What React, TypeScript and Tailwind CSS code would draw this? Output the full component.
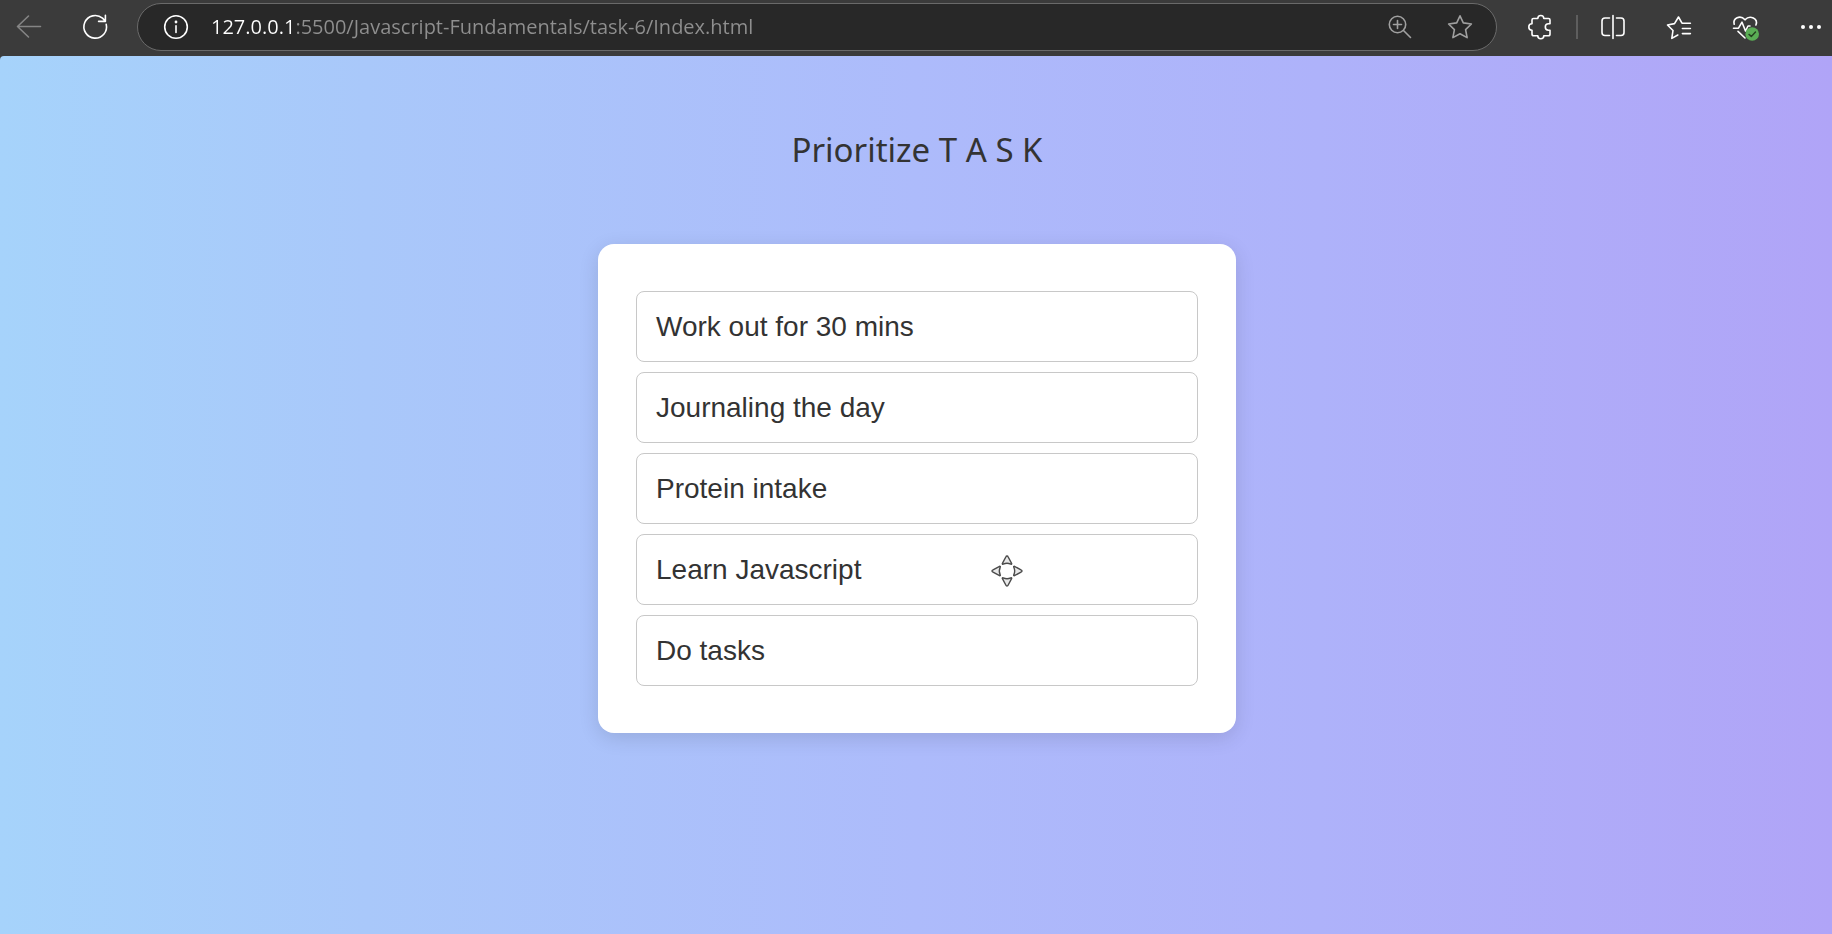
import { useState } from "react";
import type { ReactNode } from "react";

const tasks = [
  "Work out for 30 mins",
  "Journaling the day",
  "Protein intake",
  "Learn Javascript",
  "Do tasks",
];

function Icon({ children }: { children: ReactNode }) {
  return (
    <svg
      viewBox="0 0 28 28"
      className="size-7 shrink-0"
      fill="none"
      stroke="currentColor"
      strokeWidth="1.6"
      strokeLinecap="round"
      strokeLinejoin="round"
      aria-hidden="true"
    >
      {children}
    </svg>
  );
}

function ToolButton({ label, children }: { label: string; children: ReactNode }) {
  return (
    <button type="button" aria-label={label} className="flex size-7 shrink-0 items-center justify-center">
      {children}
    </button>
  );
}

function Toolbar() {
  const [url, setUrl] = useState("127.0.0.1:5500/Javascript-Fundamentals/task-6/Index.html");
  return (
    <header className="flex h-14 items-center bg-[#3b3b3b] pr-[7px] pb-[3px] pl-[15px] text-white">
      <div className="flex items-center gap-[38px] pr-7">
        <span className="text-[#858585]">
          <ToolButton label="Back">
            <Icon>
              <path d="M25.5 13.5H2.5M13.5 3L2.5 13.5 13.5 24" />
            </Icon>
          </ToolButton>
        </span>
        <ToolButton label="Refresh">
          <Icon>
            <path d="M25.2 11.2A11.3 11.3 0 1 1 21.5 5.2L24.2 7.8M24.4 2.2V8.4H17.6" />
          </Icon>
        </ToolButton>
      </div>
      <div className="flex h-12 min-w-0 flex-1 items-center rounded-full border border-[#6a6a6a] bg-[#282828] pr-[22px] pl-6">
        <Icon>
          <circle cx="14" cy="14" r="11.3" />
          <path d="M14 12.8V19.5" />
          <circle cx="14" cy="9" r="0.6" fill="currentColor" />
        </Icon>
        <input
          type="text"
          aria-label="Address"
          value={url}
          onChange={(e) => setUrl(e.target.value)}
          className="ml-[21px] min-w-0 flex-1 bg-[linear-gradient(to_right,#ffffff_82px,#8f8f8f_82px)] bg-clip-text font-['Open_Sans',sans-serif] text-[20px] text-transparent outline-none"
        />
        <div className="flex items-center gap-8 text-[#a0a0a0]">
          <ToolButton label="Zoom">
            <Icon>
              <circle cx="11.5" cy="11.5" r="8.2" />
              <path d="M17.5 17.5L24.5 24.5M11.5 7.5v8M7.5 11.5h8" />
            </Icon>
          </ToolButton>
          <ToolButton label="Add to favorites">
            <Icon>
              <path d="M14 2.8L17.3 9.9 25.4 11 19.6 16.6 21.1 24.6 14 20.8 6.9 24.6 8.4 16.6 2.6 11 10.7 9.9Z" />
            </Icon>
          </ToolButton>
        </div>
      </div>
      <div className="flex items-center pl-[30px]">
        <ToolButton label="Extensions">
          <Icon>
            <path d="M6.5 5.5H10.8A3 3 0 0 1 16.8 5.5H21.5Q23 5.5 23 7V10.8H21.5A3.2 3.2 0 0 0 21.5 17.2H23V21Q23 22.8 21.3 22.8H16.8A3 3 0 0 1 10.8 22.8H6.8Q5 22.8 5 21V17.2A3.2 3.2 0 0 1 5 10.8V7Q5 5.5 6.5 5.5Z" />
          </Icon>
        </ToolButton>
        <span className="mx-[21px] h-6 w-0.5 bg-[#5e5e5e]" />
        <div className="flex items-center gap-[38px]">
          <ToolButton label="Split screen">
            <Icon>
              <path d="M14 2.5V25.5M10.5 5H6Q3 5 3 8V19.5Q3 22.5 6 22.5H10.5M17.5 5H22Q25 5 25 8V19.5Q25 22.5 22 22.5H17.5" />
            </Icon>
          </ToolButton>
          <ToolButton label="Favorites">
            <Icon>
              <path d="M12.8 22L6.8 25.4 8 17.5 2.5 12 9.5 10.6 13.5 4 17 10.2H25.4M17.4 15.5H25.4M17.4 20.6H25.4" />
            </Icon>
          </ToolButton>
          <ToolButton label="Browser essentials">
            <Icon>
              <path d="M3.2 11.2C1.6 5.5 9 1.4 14 6.8 19 1.4 27.5 5.8 24.9 12M2.5 15.2H7.5L11 9.2 14.5 18 17 13H19M7 18.4L14 25" />
              <circle cx="21.2" cy="21" r="6.8" fill="#5aae55" stroke="none" />
              <path d="M18 21.4L20.3 23.4 24.5 18.9" stroke="#24401f" strokeWidth="1.4" />
            </Icon>
          </ToolButton>
          <ToolButton label="Settings and more">
            <Icon>
              <g fill="currentColor" stroke="none">
                <circle cx="6" cy="14" r="2" />
                <circle cx="14" cy="14" r="2" />
                <circle cx="22" cy="14" r="2" />
              </g>
            </Icon>
          </ToolButton>
        </div>
      </div>
    </header>
  );
}

function MoveCursor() {
  return (
    <svg
      viewBox="0 0 32 32"
      className="absolute top-5 left-[354px] size-8"
      fill="#e8e8e8"
      stroke="#4a4a4a"
      strokeWidth="1.4"
      strokeLinejoin="round"
      aria-hidden="true"
    >
      {[0, 90, 180, 270].map((angle) => (
        <path
          key={angle}
          d="M16 1Q15.2 1 14.8 2L11.3 8.6Q11.2 9.6 12.2 9.2Q16 7.4 19.8 9.2Q20.8 9.6 20.7 8.6L17.2 2Q16.8 1 16 1Z"
          transform={`rotate(${angle} 16 16)`}
        />
      ))}
    </svg>
  );
}

export default function App() {
  return (
    <div className="flex min-h-screen flex-col bg-[#3b3b3b]">
      <Toolbar />
      <main className="flex flex-1 flex-col items-center rounded-tl-sm bg-[linear-gradient(to_right,#a6d3fb,#a9c8fa_20%,#adbbfb_50%,#aeb2fa_72%,#b0a4f7)] pr-6 pb-12 pl-[26px] text-[#333333]">
        <h1 className="mt-[74px] font-['Noto_Sans',sans-serif] text-[33px] leading-10">Prioritize T A S K</h1>
        <ul className="mt-[74px] flex w-full max-w-[638px] flex-col gap-2.5 rounded-2xl bg-white px-[38px] py-[47px] shadow-[0_5px_20px_rgba(0,0,0,0.12)]">
          {tasks.map((task) => (
            <li
              key={task}
              draggable
              className="relative cursor-move rounded-lg border border-[#c8c8c8] px-[19px] py-[17px] font-['Liberation_Sans',Arial,sans-serif] text-[28px] leading-[35px]"
            >
              {task}
              {task === "Learn Javascript" && <MoveCursor />}
            </li>
          ))}
        </ul>
      </main>
    </div>
  );
}
